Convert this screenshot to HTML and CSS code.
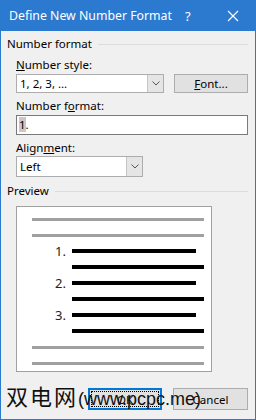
FILE: index.html
```html
<!DOCTYPE html>
<html>
<head>
<meta charset="utf-8">
<link rel="stylesheet" href="styles.css">
</head>
<body>
<div class="dialog">
  <div class="titlebar">
    <span class="title">Define New Number Format</span>
    <span class="help">?</span>
    <svg class="close" width="12" height="12" viewBox="0 0 12 12"><path d="M1 1 L11 11 M11 1 L1 11" stroke="#fff" stroke-width="1.2" fill="none"/></svg>
  </div>
  <div class="content">
    <div class="group-head"><span>Number format</span><span class="rule"></span></div>
    <div class="field-label"><u>N</u>umber style:</div>
    <div class="row">
      <div class="combo combo-style"><span class="combo-text">1, 2, 3, …</span><span class="drop"><svg width="8" height="5" viewBox="0 0 8 5"><path d="M0.5 0.5 L4 4 L7.5 0.5" stroke="#555" stroke-width="1" fill="none"/></svg></span></div>
      <div class="btn btn-font"><span><u>F</u>ont...</span></div>
    </div>
    <div class="field-label">Number f<u>o</u>rmat:</div>
    <div class="textbox"><span class="sel">1</span>.</div>
    <div class="field-label">Align<u>m</u>ent:</div>
    <div class="combo combo-align"><span class="combo-text">Left</span><span class="drop"><svg width="8" height="5" viewBox="0 0 8 5"><path d="M0.5 0.5 L4 4 L7.5 0.5" stroke="#555" stroke-width="1" fill="none"/></svg></span></div>
    <div class="group-head preview-head"><span>Preview</span><span class="rule"></span></div>
    <div class="preview">
      <div class="prow"><span class="bar grey"></span></div>
      <div class="prow"><span class="bar grey"></span></div>
      <div class="prow num"><span class="n">1.</span><span class="bar black short"></span></div>
      <div class="prow num"><span class="n"></span><span class="bar black"></span></div>
      <div class="prow num"><span class="n">2.</span><span class="bar black short"></span></div>
      <div class="prow num"><span class="n"></span><span class="bar black"></span></div>
      <div class="prow num"><span class="n">3.</span><span class="bar black short"></span></div>
      <div class="prow num"><span class="n"></span><span class="bar black"></span></div>
      <div class="prow"><span class="bar grey"></span></div>
      <div class="prow"><span class="bar grey"></span></div>
    </div>
    <div class="buttons">
      <div class="btn btn-ok"><span class="focus">OK</span></div>
      <div class="btn btn-cancel"><span>Cancel</span></div>
    </div>
  </div>
  <div class="watermark"><span class="cjk">双电网</span><span class="latin">(www.pcpc.me)</span></div>
</div>
</body>
</html>
```

FILE: styles.css
```css
* { box-sizing: border-box; }
html, body { margin: 0; padding: 0; }
body {
  width: 256px;
  height: 420px;
  overflow: hidden;
  font-family: "Noto Sans", "Open Sans", sans-serif;
  font-size: 11.5px;
  color: #000;
  background: #f0f0f0;
}
.dialog {
  position: relative;
  width: 256px;
  height: 420px;
  background: #f0f0f0;
  border: 1px solid #2c7ad0;
  border-top: none;
}
.titlebar {
  height: 31px;
  margin: 0 -1px;
  background: #2c7ad0;
  color: #fff;
  display: flex;
  align-items: center;
  padding-left: 9px;
  font-size: 12.3px;
}
.title { flex: 1; }
.help { width: 12px; margin-right: 30px; font-size: 13px; }
.close { margin-right: 17px; }
.content {
  padding: 5px 7px 0 6px;
  display: flex;
  flex-direction: column;
}
.group-head {
  height: 16px;
  line-height: 16px;
  display: flex;
  align-items: center;
}
.rule {
  flex: 1;
  height: 1px;
  background: #dcdcdc;
  margin-left: 6px;
}
.field-label {
  margin: 5px 0 0 9px;
  height: 16px;
  line-height: 16px;
}
.row {
  display: flex;
  margin: 1px 0 0 9px;
}
.combo {
  display: flex;
  height: 19px;
  background: #fff;
  border: 1px solid #adadad;
}
.combo-style { width: 148px; }
.combo-text { flex: 1; padding-left: 3px; line-height: 17px; }
.drop {
  width: 16px;
  background: #e5e5e5;
  border-left: 1px solid #c5c5c5;
  display: flex;
  align-items: center;
  justify-content: center;
}
.btn {
  display: flex;
  align-items: center;
  justify-content: center;
  background: #e1e1e1;
  border: 1px solid #adadad;
}
.btn-font { width: 74px; height: 19px; margin-left: auto; }
.textbox {
  margin: 1px 0 0 9px;
  height: 20px;
  background: #fff;
  border: 1px solid #7a7a7a;
  padding-left: 2px;
  line-height: 18px;
}
.sel { background: #c8c8c8; }
.combo-align {
  margin: 0 0 0 9px;
  width: 127px;
  height: 21px;
}
.combo-align .combo-text { line-height: 19px; }
.preview-head { margin-top: 6px; }
.preview {
  margin: 7px 0 0 9px;
  width: 196px;
  height: 166px;
  background: #fff;
  border: 1px solid #a0a0a0;
  padding: 4px 7px 0 15px;
  display: flex;
  flex-direction: column;
}
.prow {
  height: 16px;
  display: flex;
  align-items: center;
}
.bar { display: block; flex: 1; }
.grey { height: 3px; background: #a0a0a0; }
.black { height: 4px; background: #000; }
.black.short { margin-right: 8px; }
.prow.num .n {
  width: 55px;
  margin-left: -15px;
  padding-right: 6px;
  text-align: right;
  font-size: 13px;
  color: #222;
}
.buttons {
  display: flex;
  justify-content: flex-end;
  gap: 11px;
  margin-top: 16px;
}
.buttons .btn { height: 22px; }
.btn-ok {
  width: 74px;
  border: 1px solid #0078d7;
  box-shadow: inset 0 0 0 1px #0078d7;
  padding: 2px;
}
.btn-ok .focus {
  width: 100%;
  height: 100%;
  border: 1px dotted #000;
  display: flex;
  align-items: center;
  justify-content: center;
}
.btn-cancel { width: 75px; }
.watermark {
  position: absolute;
  left: 5px;
  top: 379px;
  color: #111;
  white-space: nowrap;
  display: flex;
  align-items: baseline;
}
.cjk {
  font-family: "Noto Sans CJK SC", sans-serif;
  font-size: 22px;
  letter-spacing: 2px;
}
.latin {
  font-family: "Liberation Sans", sans-serif;
  font-size: 18px;
}
```
